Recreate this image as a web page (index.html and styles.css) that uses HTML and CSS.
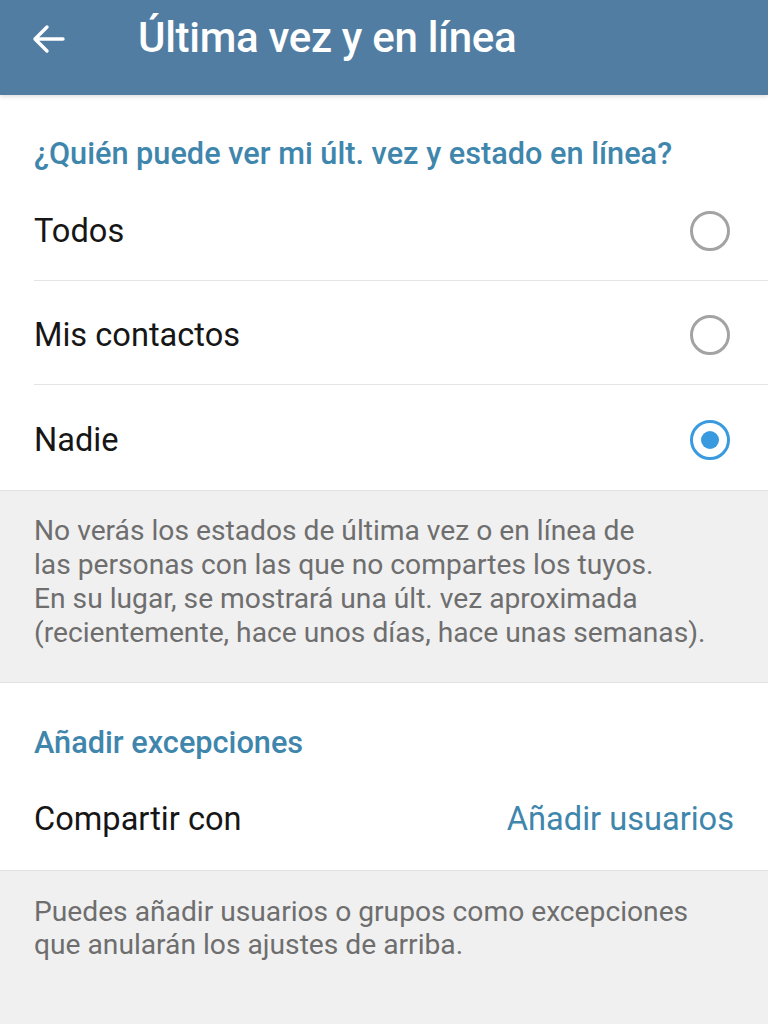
FILE: index.html
```html
<!DOCTYPE html>
<html lang="es">
<head>
  <meta name="viewport" content="width=device-width, initial-scale=1.0">
  <title>Última vez y en línea</title>
  <link rel="stylesheet" href="styles.css">
</head>
<body>
  <!-- Barra superior -->
  <header class="topbar">
    <svg class="back" width="34" height="30" viewBox="0 0 34 30">
      <path d="M32 15H4M16 3L4 15l12 12" fill="none" stroke="#fff" stroke-width="3.4" stroke-linecap="round" stroke-linejoin="round"/>
    </svg>
    <h1>Última vez y en línea</h1>
  </header>

  <section class="card">
    <h2 class="section-title">¿Quién puede ver mi últ. vez y estado en línea?</h2>
    <div class="option">
      <span>Todos</span>
      <span class="radio"></span>
    </div>
    <div class="option">
      <span>Mis contactos</span>
      <span class="radio"></span>
    </div>
    <div class="option">
      <span>Nadie</span>
      <span class="radio checked"></span>
    </div>
  </section>

  <p class="info info-first">No verás los estados de última vez o en línea de<br>las personas con las que no compartes los tuyos.<br>En su lugar, se mostrará una últ. vez aproximada<br>(recientemente, hace unos días, hace unas semanas).</p>

  <section class="card">
    <h2 class="section-title exceptions">Añadir excepciones</h2>
    <div class="share">
      <span>Compartir con</span>
      <span class="link">Añadir usuarios</span>
    </div>
  </section>

  <p class="info info-last">Puedes añadir usuarios o grupos como excepciones<br>que anularán los ajustes de arriba.</p>
</body>
</html>
```

FILE: styles.css
```css
body {
  margin: 0;
  font-family: Roboto, "Noto Sans", sans-serif;
  background: #f0f0f0;
  min-height: 1024px;
}
/* Barra superior */
.topbar {
  height: 95px;
  background: #517da2;
  display: flex;
  align-items: center;
  padding: 0 0 0 31px;
  box-shadow: 0 2px 4px rgba(0,0,0,0.12);
  position: relative;
}
.back {
  margin-top: -18px;
}
.topbar h1 {
  margin: -20px 0 0 73px;
  color: #fff;
  font-size: 42px;
  font-weight: 500;
  letter-spacing: -0.3px;
}
.card {
  background: #fff;
}
.section-title {
  margin: 0;
  padding: 41px 34px 5px;
  color: #3f86ad;
  font-size: 30.7px;
  font-weight: 500;
  line-height: 36px;
}
/* Filas de opciones */
.option {
  height: 104px;
  box-sizing: border-box;
  margin-left: 34px;
  padding: 4px 38px 0 0;
  display: flex;
  align-items: center;
  justify-content: space-between;
  font-size: 32.6px;
  color: #161616;
  border-bottom: 1px solid #e4e4e4;
}
.option:last-child {
  height: 105px;
  border-bottom: none;
}
.radio {
  width: 34px;
  height: 34px;
  border: 3px solid #a3a3a3;
  border-radius: 50%;
  position: relative;
}
.radio.checked {
  border-color: #3a9adf;
}
.radio.checked::after {
  content: "";
  position: absolute;
  left: 8px;
  top: 8px;
  width: 18px;
  height: 18px;
  border-radius: 50%;
  background: #3a9adf;
}
/* Texto gris */
.info {
  margin: 0;
  padding: 23px 34px 0;
  color: #6e6e6e;
  font-size: 28.2px;
  line-height: 34px;
  border-top: 1px solid #e2e2e2;
  border-bottom: 1px solid #e2e2e2;
}
.info-first {
  height: 168px;
}
.info-last {
  padding-top: 24px;
  line-height: 33px;
  border-bottom: none;
}
.exceptions {
  padding-top: 42px;
  padding-bottom: 0;
}
.share {
  height: 109px;
  box-sizing: border-box;
  padding: 6px 34px 0;
  display: flex;
  align-items: center;
  justify-content: space-between;
  font-size: 32.6px;
  color: #161616;
}
.link {
  color: #3f86ad;
}
```
